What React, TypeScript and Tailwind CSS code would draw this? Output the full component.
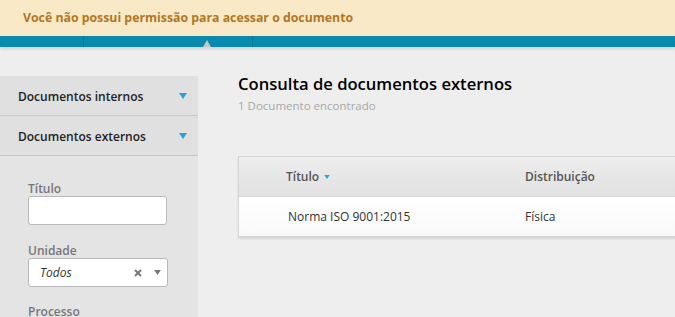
import React from 'react';

const font = { fontFamily: '"Open Sans", "Noto Sans", sans-serif' };

const Caret = ({ className }: { className: string }) => (
  <svg viewBox="0 0 8 6" className={className}>
    <path d="M0 0h8L4 6z" fill="currentColor" />
  </svg>
);

const SidebarHeader = ({ label }: { label: string }) => (
  <div className="flex h-[40px] items-center justify-between border-b border-[#c9c9c9] bg-[#e0e0e0] pl-[18px] pr-[11px]">
    <span className="pt-[2px] text-[12px] font-semibold text-[#222]">{label}</span>
    <Caret className="h-[6px] w-[8px] text-[#25a2da]" />
  </div>
);

export default function App() {
  return (
    <div className="h-[317px] w-[675px] overflow-hidden bg-[#eeeeee]" style={font}>
      {/* Aviso */}
      <div className="flex h-[36px] items-center bg-[#f9e9c6] pl-[23px]">
        <span className="text-[12.3px] font-bold text-[#b17724]">
          Você não possui permissão para acessar o documento
        </span>
      </div>

      {/* Barra de navegação */}
      <div className="relative flex h-[11px] bg-[#078aad] shadow-[0_2px_3px_rgba(0,0,0,0.12)]">
        <div className="w-[84px] border-r border-[#0b7896]" />
        <div className="w-[169px] border-r border-[#0b7896]" />
        <div className="absolute bottom-0 left-[203px] h-0 w-0 border-x-[4px] border-b-[7px] border-x-transparent border-b-[#c6c6c6]" />
      </div>

      <div className="mt-[29px] flex">
        {/* Sidebar */}
        <aside className="h-[241px] w-[198px] shrink-0 bg-[#e4e4e4]">
          <SidebarHeader label="Documentos internos" />
          <SidebarHeader label="Documentos externos" />
          <div className="flex flex-col px-[28px] pt-[25px]">
            <label className="text-[12px] font-semibold leading-[16px] text-[#777]">Título</label>
            <div className="-mt-[1px] h-[29px] w-[139px] rounded-[3px] border border-[#b9b9b9] bg-white" />
            <label className="mt-[18px] text-[12px] font-semibold leading-[16px] text-[#777]">Unidade</label>
            <div className="-mt-[1px] flex h-[29px] w-[140px] items-center rounded-[3px] border border-[#b9b9b9] bg-white pl-[11px] pr-[6px]">
              <span className="flex-1 text-[12px] italic text-[#333]">Todos</span>
              <svg viewBox="0 0 8 8" className="mr-[12px] h-[8px] w-[8px] text-[#777]">
                <path d="M1 1l6 6M7 1L1 7" stroke="currentColor" strokeWidth="2" />
              </svg>
              <Caret className="h-[5px] w-[7px] text-[#777]" />
            </div>
            <label className="mt-[17px] text-[12px] font-semibold leading-[16px] text-[#777]">Processo</label>
          </div>
        </aside>

        {/* Conteúdo */}
        <main className="flex-1 pl-[40px]">
          <h1 className="-mt-[4px] text-[16.6px] font-semibold text-black">Consulta de documentos externos</h1>
          <p className="text-[11.5px] text-[#a8a8a8]">1 Documento encontrado</p>

          <div className="mt-[42px] w-[460px] border border-[#d6d6d6] bg-white shadow-[0_2px_2px_rgba(0,0,0,0.1)]">
            <div className="flex h-[40px] items-center border-b border-[#d8d8d8] bg-gradient-to-b from-[#ededed] to-[#e1e1e1] text-[12px] font-semibold text-[#555]">
              <div className="flex w-[286px] items-center pl-[47px]">
                Título
                <Caret className="ml-[5px] h-[4px] w-[6px] text-[#25a2da]" />
              </div>
              <div>Distribuição</div>
            </div>
            <div className="flex h-[39px] items-center bg-gradient-to-b from-white to-[#f9f9f9] text-[12px] text-[#333]">
              <div className="w-[286px] pl-[49px]">Norma ISO 9001:2015</div>
              <div>Física</div>
            </div>
          </div>
        </main>
      </div>
    </div>
  );
}
